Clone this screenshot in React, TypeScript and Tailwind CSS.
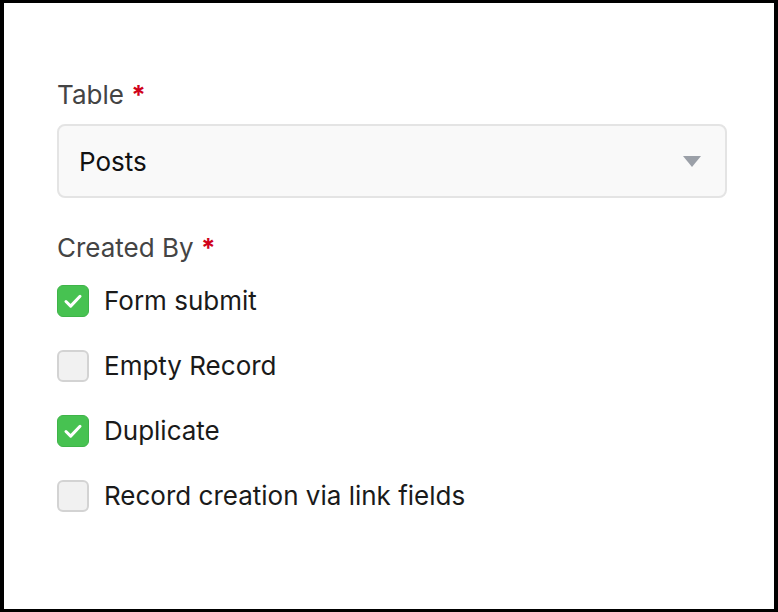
const options = [
  { label: 'Form submit', checked: true },
  { label: 'Empty Record', checked: false },
  { label: 'Duplicate', checked: true },
  { label: 'Record creation via link fields', checked: false },
];

function Checkbox({ checked }: { checked: boolean }) {
  if (checked) {
    return (
      <div className="w-8 h-8 rounded-[6px] bg-[#47c251] border border-[#3fb449] flex items-center justify-center shrink-0">
        <svg width="32" height="32" viewBox="0 0 32 32" fill="none">
          <path d="M8.5 16.5l5 5L23.5 11" stroke="white" strokeWidth="3.2" strokeLinecap="round" strokeLinejoin="round" />
        </svg>
      </div>
    );
  }
  return <div className="w-8 h-8 rounded-[6px] bg-[#f1f1f1] border-2 border-[#d3d3d3] shrink-0" />;
}

export default function App() {
  return (
    <div
      className="w-[778px] h-[612px] bg-white border-black border-l-4 border-r-4 border-t-[3px] border-b-[3px] pl-[53px] pr-[47px] pt-[76px]"
      style={{ fontFamily: 'Inter, "Noto Sans", sans-serif' }}
    >
      {/* Table */}
      <div className="text-[26px] leading-[32px] text-[#444]">
        Table <span className="font-bold text-[#d0021b]">*</span>
      </div>
      <div className="mt-[13px] h-[74px] rounded-[8px] border-2 border-[#e4e4e4] bg-[#f9f9f9] flex items-center justify-between pl-[20px] pr-[24px]">
        <span className="text-[26px] text-[#111]">Posts</span>
        <svg width="18" height="11" viewBox="0 0 18 11">
          <path d="M0 0h18L9 11z" fill="#9ba0a8" />
        </svg>
      </div>

      {/* Created By */}
      <div className="mt-[34px] text-[26px] leading-[32px] text-[#444]">
        Created By <span className="font-bold text-[#d0021b]">*</span>
      </div>
      <div className="mt-[21px] flex flex-col gap-[33px]">
        {options.map((opt) => (
          <div key={opt.label} className="flex items-center gap-[15px]">
            <Checkbox checked={opt.checked} />
            <span className="text-[26px] leading-[32px] text-[#1a1a1a]">{opt.label}</span>
          </div>
        ))}
      </div>
    </div>
  );
}
